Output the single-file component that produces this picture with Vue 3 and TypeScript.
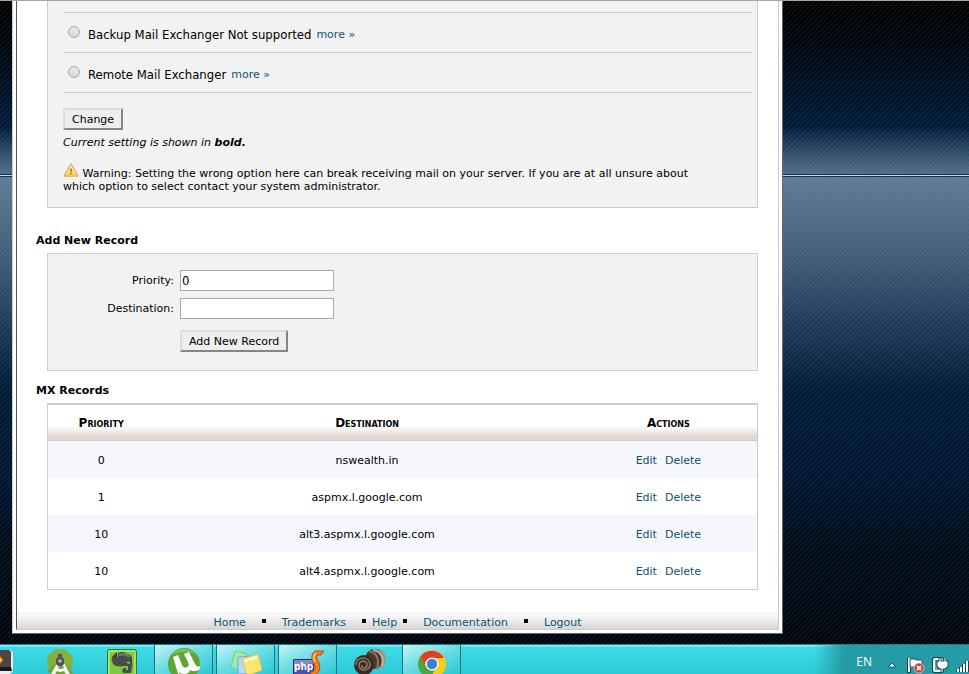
<script setup lang="ts">
import { ref } from 'vue'

interface MxRecord {
  priority: number
  destination: string
}

const exchangers = [
  { id: 'backup', label: 'Backup Mail Exchanger Not supported' },
  { id: 'remote', label: 'Remote Mail Exchanger' },
]
const exchanger = ref('')
const priority = ref('0')
const destination = ref('')

const records: MxRecord[] = [
  { priority: 0, destination: 'nswealth.in' },
  { priority: 1, destination: 'aspmx.l.google.com' },
  { priority: 10, destination: 'alt3.aspmx.l.google.com' },
  { priority: 10, destination: 'alt4.aspmx.l.google.com' },
]
</script>

<template>
  <div class="screen">
    <div class="viewport">
      <main class="page">
        <div class="inner">
          <div class="content">
            <form class="panel routing" @submit.prevent>
              <ul class="options">
                <li v-for="item in exchangers" :key="item.id">
                  <input :id="item.id" v-model="exchanger" type="radio" name="exchanger" :value="item.id" />
                  <label :for="item.id">{{ item.label }}</label>
                  <a href="#more">more »</a>
                </li>
              </ul>
              <button type="submit" class="btn">Change</button>
              <p class="current">Current setting is shown in <b>bold.</b></p>
              <p class="warning">
                <svg class="warn-icon" viewBox="0 0 16 14" aria-hidden="true">
                  <defs>
                    <linearGradient id="warn" x1="0" y1="0" x2="0" y2="1">
                      <stop offset="0" stop-color="#fff6b8" />
                      <stop offset="1" stop-color="#f5c842" />
                    </linearGradient>
                  </defs>
                  <path d="M8 1 15 13H1Z" fill="#fff" stroke="#e0aa55" stroke-width="1.4" stroke-linejoin="round" />
                  <path d="M8 3.2 13.2 12H2.8Z" fill="url(#warn)" />
                  <path d="M8 5.5v3.4M8 10v1.3" stroke="#b97013" stroke-width="1.6" />
                </svg>
                Warning: Setting the wrong option here can break receiving mail on your server. If you are at all unsure about which option to select contact your system administrator.
              </p>
            </form>

            <h2 class="add-title">Add New Record</h2>
            <form class="panel add" @submit.prevent>
              <label for="priority">Priority:</label>
              <input id="priority" v-model="priority" type="text" />
              <label for="destination">Destination:</label>
              <input id="destination" v-model="destination" type="text" />
              <button type="submit" class="btn">Add New Record</button>
            </form>

            <h2 class="mx-title">MX Records</h2>
            <table class="records">
              <thead>
                <tr>
                  <th class="col-priority">Priority</th>
                  <th class="col-destination">Destination</th>
                  <th>Actions</th>
                </tr>
              </thead>
              <tbody>
                <tr v-for="record in records" :key="record.destination">
                  <td>{{ record.priority }}</td>
                  <td>{{ record.destination }}</td>
                  <td>
                    <span class="actions"><a href="#edit">Edit</a><a href="#delete">Delete</a></span>
                  </td>
                </tr>
              </tbody>
            </table>
          </div>
          <footer class="footer">
            <a href="#home">Home</a><i class="dot wide"></i>
            <a href="#trademarks">Trademarks</a><i class="dot before"></i>
            <a href="#help">Help</a><i class="dot after"></i>
            <a href="#documentation">Documentation</a><i class="dot wide"></i>
            <a href="#logout">Logout</a>
          </footer>
        </div>
      </main>
    </div>

    <div class="taskbar">
      <div class="task media">
        <svg viewBox="0 0 13 30">
          <path d="M0 5h10l3 2v20l-4 2H0Z" fill="#eee" />
          <path d="M0 5h9l2 2v15H0Z" fill="#4a4646" />
          <path d="M0 22h11l1 4H0Z" fill="#19191b" />
          <path d="M0 11 3.5 15 0 19" fill="#ff7619" />
          <path d="M0 13 1.8 15 0 17" fill="#ffe04d" />
        </svg>
      </div>
      <div class="task studio">
        <svg viewBox="0 0 32 30">
          <circle cx="16" cy="17" r="13" fill="#84b03e" />
          <path d="M16 15 29 28 26 30H8L3 26Z" fill="#769f3b" />
          <path d="M13 18 6 31h4l3-5q3 2 7 0l3 5h4l-7-13-2 1 2 4q-4 2-6 0l2-4Z" fill="#f4f4f4" />
          <path d="M14 9h4v3l2 2v5l-2 2h-4l-2-2v-5l2-2Z" fill="#4c5557" />
          <circle cx="16" cy="16" r="1.8" fill="#b4c1a9" />
        </svg>
      </div>
      <div class="task evernote">
        <svg viewBox="0 0 32 30">
          <rect x="1.5" y="4.5" width="29" height="29" rx="2" fill="#7fc843" stroke="#2f7a25" />
          <rect x="3" y="6" width="26" height="27" rx="2" fill="none" stroke="#b3e970" stroke-width="1.5" />
          <path d="M12 8q4-2 8 0l1 1q4 0 5 4 1 8-1 15h-7c-3-1-2-6 2-5v2h2v-4h-5q-2 1-4 0c-4 1-6-2-7-5-1-2 0-3 0-4h6Z" fill="#474d48" />
          <path d="M11 7v5H6Z" fill="#353c35" />
          <path d="M21 17q3-1 3 2-1-1-3-1Z" fill="#b8ed69" />
          <path d="M13 10q8-2 10 2" fill="none" stroke="#777e76" stroke-width="2" />
        </svg>
      </div>
      <div class="task torrent open">
        <svg viewBox="0 0 32 30">
          <circle cx="16" cy="19" r="16" fill="#5fa636" />
          <path d="M3 10Q14-2 28 9q-9-5-25 1Z" fill="#83bd60" />
          <path d="M5 12 10 10l4 10q2 4 5 2 3-1 1-5l-4-8 5-2 6 12q2 4 5 2v3q-5 4-10 1-1 4-6 4-3 0-5-2l2 5H11Z" fill="#fff" />
        </svg>
      </div>
      <div class="task notes open">
        <svg viewBox="0 0 32 30">
          <path d="m5 6 12 3-3 18-13-5Z" fill="#a7e9a1" stroke="#74cb87" />
          <path d="m8 12 14-1 1 18H8Z" fill="#b5dcff" stroke="#61a9de" />
          <path d="m12 14 16-5 4 16-15 6Z" fill="#f9e66e" stroke="#dcc64d" />
          <path d="m14 16 13-4" stroke="#fff9bd" stroke-width="3" />
        </svg>
      </div>
      <div class="task storm open">
        <svg viewBox="0 0 32 30">
          <path d="M1.5 14.5h20V30h-20Z" fill="#4b52a5" stroke="#30306f" />
          <path d="M2 15h19v4Q12 18 2 24Z" fill="#858ac6" />
          <text x="2" y="25" class="php">php</text>
          <path d="M23 6h9l-3 4h-3c-3 3 0 5 1 8 2 6 0 10-5 13h-4l1-4c4 0 5-4 3-8-3-5-3-10 1-13Z" fill="#f47c1f" stroke="#b94812" />
          <path d="M24 8q-4 4-1 9" fill="none" stroke="#ffc058" stroke-width="2" />
        </svg>
      </div>
      <div class="task shell">
        <svg viewBox="0 0 32 30">
          <ellipse cx="24" cy="14" rx="8" ry="10" fill="#a39488" />
          <ellipse cx="20" cy="14" rx="9" ry="10" fill="#4a372d" />
          <path d="M19 5q12 2 9 16" fill="none" stroke="#c3b5a8" stroke-width="2" />
          <path d="M15 6q12 3 8 18" fill="none" stroke="#8b7566" stroke-width="2" />
          <circle cx="10" cy="20" r="10" fill="#3c2b23" />
          <path d="M2 20c0-9 13-9 14-1 0 8-11 8-11 1 0-5 8-5 8 0 0 4-6 4-5 0" fill="none" stroke="#8f7c6e" stroke-width="1.5" />
        </svg>
      </div>
      <div class="task chrome open">
        <svg viewBox="0 0 32 30">
          <circle cx="16" cy="19" r="14" fill="#f6cd1b" />
          <path d="M4 12A14 14 0 0 1 28 13H16a6 6 0 0 0-6 9Z" fill="#dd3e30" />
          <path d="M4 12 11 23a6 6 0 0 0 8 2l-5 8A14 14 0 0 1 4 12Z" fill="#46a64a" />
          <circle cx="16" cy="19" r="6.5" fill="#fff" />
          <circle cx="16" cy="19" r="5.2" fill="#3c80d2" />
        </svg>
      </div>
      <div class="tray">
        <span class="lang">EN</span>
        <svg class="tray-icons" viewBox="0 0 84 30">
          <path d="m3 22 4-4 4 4Z" fill="#fff" stroke="#16646b" />
          <path d="M24 13v15" stroke="#14464b" stroke-width="4" />
          <path d="M24 13v14" stroke="#fff" stroke-width="2" />
          <path d="M25 14h5l1 1h6v8h-6l-1-1h-5Z" fill="#fff" stroke="#205a5f" />
          <circle cx="34" cy="23" r="5" fill="#dd3327" stroke="#fff" stroke-width=".6" />
          <path d="m32 21 4 4m0-4-4 4" stroke="#fff" stroke-width="1.8" />
          <rect x="49" y="14" width="8" height="12" rx="1" fill="none" stroke="#14464b" stroke-width="4" />
          <rect x="49" y="14" width="8" height="12" rx="1" fill="#4fa5ab" stroke="#fff" stroke-width="2" />
          <path d="M53 17h9v4q-1 2-3 2h-3q-2 0-3-2Zm2 0v-4m5 4v-4m-3 10v4" fill="#fff" stroke="#175157" stroke-width="3" />
          <path d="M53 17h9v4q-1 2-3 2h-3q-2 0-3-2Zm2 0v-4m5 4v-4m-3 10v4" fill="#fff" stroke="#fff" />
          <path d="M73 27v-3m3 3v-5m3 5v-8m3 8V16" stroke="#16484c" stroke-width="4" />
          <path d="M73 27v-3m3 3v-5m3 5v-8m3 8V16" stroke="#fff" stroke-width="2" />
        </svg>
      </div>
    </div>
  </div>
</template>

<style>
body {
  margin: 0;
}
</style>

<style scoped>
.screen {
  display: flex;
  flex-direction: column;
  min-height: 100vh;
  box-sizing: border-box;
  border-top: 1px solid #a5a5a5;
  font-family: "DejaVu Sans", Verdana, sans-serif;
  font-size: 11px;
  line-height: 13px;
  color: #000;
}
.viewport {
  flex: 1;
  padding: 0 12px 10px;
  background:
    linear-gradient(transparent 173px, #0b315a 173px 174px, #c7d8e8 174px 175px, #0b315a 175px 176px, transparent 176px),
    linear-gradient(135deg, transparent 42%, rgba(160, 185, 195, 0.13) 42% 58%, transparent 58%) 0 0 / 5px 5px,
    linear-gradient(#000 0, #00060e 45px, #001227 90px, #001b38 125px, #3a5772 157px, #506c85 172px, #627b94 177px, #3f5b75 260px, #203b59 325px, #001d36 388px, #001531 480px, #000e1a 540px, #00050e 643px);
}
.page {
  max-width: 763px;
  padding: 0 3px 3px;
  border: solid;
  border-width: 0 1px 1px;
  border-color: transparent #666 #666 #ccc;
  background: #fff;
}
.inner {
  border: solid;
  border-width: 0 1px 1px;
  border-color: transparent #ccc #ccc #555;
}
.content {
  padding: 0 20px 22px 30px;
}
.panel,
.records {
  box-sizing: border-box;
  border: 1px solid #ccc;
}
.panel {
  background: #f2f2f2;
}
.routing {
  padding: 11px 5px 14px 15px;
  border-top: 0;
}
.options {
  margin: 0 0 15px;
  padding: 0;
  list-style: none;
  border-top: 1px solid #ccc;
}
.options li {
  display: flex;
  align-items: center;
  height: 39px;
  border-bottom: 1px solid #ccc;
}
.options input {
  appearance: none;
  box-sizing: border-box;
  width: 12px;
  height: 12px;
  margin: 0 8px 1px 5px;
  border: 1px solid #a8a8a8;
  border-radius: 50%;
  background: linear-gradient(#e9e9e9, #d8d8d8);
}
.options label {
  margin: 4px 5px 0 0;
  font: 13px/16px "DejaVu Sans Condensed", "DejaVu Sans", Tahoma, sans-serif;
}
.options a {
  margin-top: 4px;
}
a {
  color: #0f5272;
  text-decoration: none;
}
.btn {
  height: 22px;
  padding: 0 7px;
  border: 2px solid;
  border-color: #ddd #858585 #858585 #ddd;
  background: #eee;
  font: inherit;
}
p {
  margin: 0;
}
.current {
  margin-top: 6px;
  font-style: italic;
}
.warning {
  margin-top: 14px;
  padding-right: 32px;
}
.warn-icon {
  width: 16px;
  height: 14px;
}
h2 {
  margin: 0 0 6px -11px;
  font-size: 11px;
  line-height: 13px;
}
.add-title {
  margin-top: 26px;
}
.mx-title {
  margin-top: 13px;
}
.add {
  display: grid;
  grid-template-columns: 126px 154px;
  gap: 7px 6px;
  align-items: center;
  padding: 16px 0 18px;
}
.add label {
  text-align: right;
}
.add input {
  box-sizing: border-box;
  width: 100%;
  height: 21px;
  padding: 0 1px;
  border: 1px solid #aaa;
  background: #fff;
  font: 13px "DejaVu Sans Condensed", "DejaVu Sans", Tahoma, sans-serif;
}
.add .btn {
  grid-column: 2;
  justify-self: start;
  margin-top: 4px;
}
.records {
  width: 100%;
  border-top-width: 2px;
  border-spacing: 0;
  text-align: center;
}
.records td {
  height: 36px;
  padding: 1px 0 0;
}
.records th {
  height: 33px;
  padding: 2px 0 0;
  border-bottom: 1px solid #ccc;
  background: linear-gradient(#fff 60%, #f2ece7 75%, #e5d8d1 90%);
  font-size: 12px;
  font-variant: small-caps;
}
.col-priority {
  width: 15%;
}
.col-destination {
  width: 60%;
}
.records tbody tr:nth-child(odd) {
  background: #f6f7fd;
}
.actions {
  display: inline-flex;
  gap: 8px;
}
.footer {
  display: flex;
  justify-content: center;
  align-items: center;
  height: 13px;
  padding-top: 4px;
  background: linear-gradient(#f4f4f4 0 2px, #fafafa 3px, #d6d6d6);
}
.dot {
  width: 4px;
  height: 4px;
  margin-bottom: 4px;
  background: #000;
}
.dot.wide {
  margin-left: 16px;
  margin-right: 16px;
}
.dot.before {
  margin-left: 16px;
  margin-right: 6px;
}
.dot.after {
  margin-left: 6px;
  margin-right: 16px;
}
.taskbar {
  display: flex;
  gap: 3px;
  box-sizing: border-box;
  height: 30px;
  overflow: hidden;
  border-top: 1px solid #287b82;
  background: linear-gradient(#8debf0 0 1px, #3edce6 2px, #2ec9d6);
}
.task {
  display: flex;
  justify-content: center;
  box-sizing: border-box;
  flex: none;
  width: 59px;
}
.task svg {
  flex: none;
  width: 32px;
  height: 30px;
}
.task.media {
  justify-content: flex-start;
  width: 27px;
}
.task.media svg {
  width: 13px;
}
.task.open {
  border: solid #16757d;
  border-width: 0 1px;
  background: linear-gradient(155deg, #c3f4f6, #69dce3 50%, #2bc8d4);
}
.php {
  fill: #fff;
  font: bold 10px "DejaVu Sans Condensed", sans-serif;
}
.tray {
  display: flex;
  justify-content: flex-end;
  gap: 13px;
  flex: none;
  width: 155px;
  margin-left: auto;
  background: linear-gradient(90deg, transparent, #249ba5 30px);
}
.lang {
  padding-top: 9px;
  color: #fff;
  font: 12px/16px "Open Sans", sans-serif;
}
.tray-icons {
  width: 84px;
  height: 30px;
}
</style>
